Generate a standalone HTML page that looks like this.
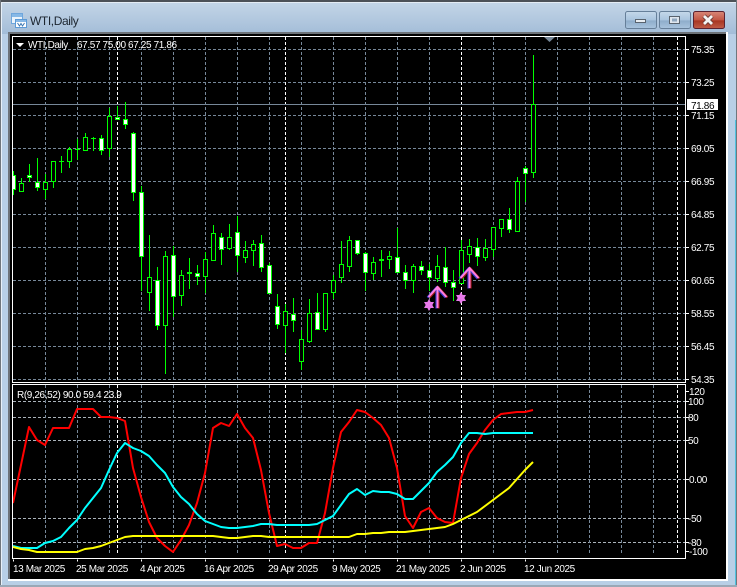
<!DOCTYPE html>
<html><head><meta charset="utf-8"><style>
html,body{margin:0;padding:0;width:737px;height:587px;overflow:hidden;background:#b8cfe6}
svg{display:block;position:absolute;left:0;top:0}
text{font-family:"Liberation Sans",sans-serif;font-size:10px;fill:#fff;letter-spacing:-.38px}
</style></head><body>
<svg width="737" height="587" viewBox="0 0 737 587" xmlns="http://www.w3.org/2000/svg">
<defs>
<linearGradient id="t" x1="0" y1="0" x2="0" y2="1"><stop offset="0" stop-color="#c6d7e8"/><stop offset="1" stop-color="#a3bdd8"/></linearGradient>
<linearGradient id="b" x1="0" y1="0" x2="0" y2="1"><stop offset="0" stop-color="#c5d8ea"/><stop offset=".5" stop-color="#a9c4de"/><stop offset=".55" stop-color="#8fadcb"/><stop offset="1" stop-color="#a9c4de"/></linearGradient>
<linearGradient id="c" x1="0" y1="0" x2="0" y2="1"><stop offset="0" stop-color="#d88878"/><stop offset=".5" stop-color="#c25644"/><stop offset=".55" stop-color="#a83622"/><stop offset="1" stop-color="#c05c48"/></linearGradient>
<clipPath id="cp"><rect x="13" y="37" width="672" height="345"/></clipPath>
<clipPath id="cs"><rect x="13" y="385" width="672" height="173"/></clipPath>
</defs>
<!-- window chrome -->
<rect width="737" height="587" fill="#b8cfe6"/>
<rect width="737" height="34" fill="url(#t)"/>
<rect width="737" height="2" fill="#4c5157"/>
<rect y="2" width="737" height="1" fill="#e4ecf4"/>
<rect x="0" y="0" width="1" height="587" fill="#70767c"/>
<rect x="1" y="3" width="1" height="584" fill="#e8f0f8"/>
<rect x="736" y="0" width="1" height="587" fill="#70767c"/>
<rect x="735" y="120" width="1" height="467" fill="#4fc3e0"/>
<rect y="585" width="737" height="2" fill="#9aa8b6"/>
<rect x="8" y="32" width="720" height="549" fill="#fff"/>
<rect x="8" y="32" width="718" height="2" fill="#6d7379"/>
<rect x="8" y="32" width="2" height="547" fill="#6d7379"/>
<rect x="10" y="34" width="716" height="545" fill="#000"/>
<!-- title -->
<g shape-rendering="crispEdges">
<rect x="11.500" y="13.500" width="11" height="10" fill="#eaf3fb" stroke="#6ea6dc"/>
<rect x="12" y="14" width="10" height="3" fill="#86b8e6"/>
<rect x="15.500" y="19.500" width="11" height="8" fill="#fff" stroke="#5c9ad6"/>
<rect x="16" y="20" width="10" height="2" fill="#86b8e6"/>
</g>
<path d="M17.500 23l2 3 1.500-2.500 1.500 2.500 2-3" fill="none" stroke="#3c78b4" stroke-width="1"/>
<text x="30" y="25" style="font-size:12px;fill:#1d2630;letter-spacing:-.4px">WTI,Daily</text>
<!-- buttons -->
<rect x="625.500" y="11.500" width="31" height="17" rx="2" fill="url(#b)" stroke="#667f99"/>
<rect x="659.500" y="11.500" width="31" height="17" rx="2" fill="url(#b)" stroke="#667f99"/>
<rect x="693.500" y="11.500" width="31" height="17" rx="2" fill="url(#c)" stroke="#5c2230"/>
<rect x="635.500" y="19.500" width="10" height="3" fill="#e8edf2" stroke="#59636e"/>
<rect x="669.500" y="16.500" width="10" height="7" fill="#dfe6ee" stroke="#59636e" stroke-width="1"/>
<rect x="672" y="18.500" width="5" height="3" fill="#8fa7bf"/>
<path d="M704 16l8 8M712 16l-8 8" stroke="#6b3a34" stroke-width="4.500" fill="none"/>
<path d="M704 16l8 8M712 16l-8 8" stroke="#f4f4f4" stroke-width="2.800" fill="none"/>
<!-- frames -->
<g fill="none" stroke="#fff" shape-rendering="crispEdges">
<path d="M12.500 36.500H685.500V382.500H12.500Z"/>
<path d="M12.500 384.500H685.500V558.500H12.500Z"/>
<path d="M13 559.500v2M77 559.500v2M141 559.500v2M205 559.500v2M269 559.500v2M333 559.500v2M397 559.500v2M461 559.500v2M525 559.500v2" transform="translate(.5 0)"/>
<path d="M686 49.500h3M686 82.500h3M686 115.500h3M686 148.500h3M686 181.500h3M686 214.500h3M686 247.500h3M686 280.500h3M686 313.500h3M686 346.500h3M686 379.500h3M686 391.500h3M686 401.500h3M686 417.500h3M686 440.500h3M686 479.500h3M686 518.500h3M686 542.500h3M686 551.500h3"/>
</g>
<!-- grid main -->
<g clip-path="url(#cp)" fill="none" shape-rendering="crispEdges">
<path stroke="#778899" stroke-dasharray="3 2" d="M13 49.500H685M13 82.500H685M13 115.500H685M13 148.500H685M13 181.500H685M13 214.500H685M13 247.500H685M13 280.500H685M13 313.500H685M13 346.500H685M13 379.500H685M45.500 37V382M77.500 37V382M109.500 37V382M141.500 37V382M173.500 37V382M205.500 37V382M237.500 37V382M269.500 37V382M301.500 37V382M333.500 37V382M365.500 37V382M397.500 37V382M429.500 37V382M493.500 37V382M525.500 37V382M557.500 37V382M589.500 37V382M621.500 37V382M653.500 37V382"/>
<path stroke="#fff" stroke-dasharray="3 2" d="M117.500 37V382M285.500 37V382M461.500 37V382M677.500 37V382"/>
<path stroke="#778899" d="M13 104.500H686"/>
<path stroke="#00ff00" d="M13.500 171V195M21.500 178V192M29.500 164V182M37.500 158V191M45.500 174V199M53.500 161V188M61.500 156V173M69.500 147V168M77.500 139V160M85.500 133V151M93.500 137V151M101.500 135V155M109.500 108V157M117.500 106V120M125.500 102V129M133.500 132V201M141.500 186V291M149.500 235V311M157.500 267V330M165.500 251V374M173.500 246V317M181.500 270V306M189.500 258V289M197.500 265V285M205.500 252V293M213.500 225V261M221.500 233V265M229.500 224V250M237.500 216V272M245.500 241V263M253.500 240V266M261.500 235V272M269.500 263V293M277.500 294V329M285.500 304V353M293.500 298V332M301.500 330V370M309.500 299V343M317.500 293V330M325.500 293V332M333.500 275V299M341.500 241V283M349.500 236V272M357.500 240V255M365.500 252V291M373.500 257V280M381.500 250V277M389.500 251V269M397.500 228V273M405.500 265V289M413.500 264V293M421.500 261V275M429.500 264V291M437.500 255V282M445.500 247V287M453.500 270V301M461.500 240V283M469.500 239V263M477.500 238V266M485.500 239V261M493.500 227V257M501.500 219V237M509.500 208V233M517.500 177V232M525.500 166V202M533.500 55V178"/>
<path stroke="#00ff00" d="M59 161.500h5M75 149.500h5M91 138.500h5"/>
<path stroke="#00ff00" fill="#000" d="M19.500 183.500h4v8h-4zM43.500 182.500h4v7h-4zM51.500 161.500h4v20h-4zM67.500 149.500h4v12h-4zM83.500 137.500h4v13h-4zM107.500 116.500h4v32h-4zM147.500 277.500h4v15h-4zM163.500 256.500h4v69h-4zM179.500 275.500h4v20h-4zM203.500 259.500h4v17h-4zM211.500 233.500h4v27h-4zM227.500 237.500h4v11h-4zM243.500 250.500h4v7h-4zM251.500 244.500h4v6h-4zM283.500 311.500h4v14h-4zM299.500 339.500h4v22h-4zM307.500 313.500h4v28h-4zM323.500 293.500h4v36h-4zM331.500 280.500h4v12h-4zM339.500 264.500h4v13h-4zM347.500 240.500h4v26h-4zM371.500 262.500h4v11h-4zM387.500 256.500h4v3h-4zM411.500 266.500h4v14h-4zM435.500 266.500h4v12h-4zM459.500 250.500h4v33h-4zM467.500 246.500h4v8h-4zM483.500 248.500h4v9h-4zM491.500 227.500h4v22h-4zM499.500 219.500h4v9h-4zM515.500 181.500h4v50h-4zM531.500 104.500h4v68h-4z"/>
<path stroke="#00ff00" fill="#fff" d="M11.500 175.500h4v14h-4zM27.500 175.500h4v2h-4zM35.500 182.500h4v5h-4zM99.500 138.500h4v12h-4zM115.500 117.500h4v2h-4zM123.500 119.500h4v5h-4zM131.500 133.500h4v59h-4zM139.500 192.500h4v64h-4zM155.500 280.500h4v45h-4zM171.500 255.500h4v41h-4zM187.500 272.500h4v1h-4zM195.500 273.500h4v3h-4zM219.500 237.500h4v12h-4zM235.500 232.500h4v23h-4zM259.500 243.500h4v24h-4zM267.500 265.500h4v28h-4zM275.500 306.500h4v18h-4zM291.500 314.500h4v6h-4zM315.500 312.500h4v17h-4zM355.500 240.500h4v13h-4zM363.500 253.500h4v19h-4zM379.500 259.500h4v1h-4zM395.500 257.500h4v15h-4zM403.500 272.500h4v8h-4zM419.500 266.500h4v4h-4zM427.500 270.500h4v7h-4zM443.500 267.500h4v15h-4zM451.500 282.500h4v5h-4zM475.500 247.500h4v9h-4zM507.500 219.500h4v10h-4zM523.500 168.500h4v5h-4z"/>
</g>
<!-- arrows -->
<g fill="none" stroke-width="2.200">
<g stroke="#a01818" transform="translate(1 .5)"><path d="M428.500 297l9-10 9 10M437.500 288V308"/><path d="M460.500 278l9-10 9 10M469.500 269V288"/></g>
<g stroke="#3a3ad0" transform="translate(-1 .5)"><path d="M428.500 297l9-10 9 10M437.500 288V308"/><path d="M460.500 278l9-10 9 10M469.500 269V288"/></g>
<g stroke="#ff80e0" stroke-width="2"><path d="M428.500 297l9-10 9 10M437.500 288V308"/><path d="M460.500 278l9-10 9 10M469.500 269V288"/></g>
</g>
<g fill="#e878ea">
<path d="M429 299l5 9h-10z"/><path d="M429 311l-5-9h10z"/>
<path d="M461 292l5 9h-10z"/><path d="M461 304l-5-9h10z"/>
</g>
<!-- indicator -->
<g clip-path="url(#cs)" fill="none" shape-rendering="crispEdges">
<path stroke="#aab2ba" stroke-dasharray="3 2" d="M13 401.500H685M13 417.500H685M13 440.500H685M13 479.500H685M13 518.500H685M13 542.500H685"/>
<path stroke="#778899" stroke-dasharray="3 2" d="M45.500 385V555M77.500 385V555M109.500 385V555M141.500 385V555M173.500 385V555M205.500 385V555M237.500 385V555M269.500 385V555M301.500 385V555M333.500 385V555M365.500 385V555M397.500 385V555M429.500 385V555M493.500 385V555M525.500 385V555M557.500 385V555M589.500 385V555M621.500 385V555M653.500 385V555"/>
<path stroke="#fff" stroke-dasharray="3 2" d="M117.500 385V555M285.500 385V555M461.500 385V555M677.500 385V555"/>
</g>
<g clip-path="url(#cs)" fill="none" stroke-width="2" stroke-linejoin="round">
<polyline stroke="#ff0000" points="13,503 21,465 29,427 37,440 45,445 53,428 61,428 69,428 77,409 85,409 93,409 101,417 109,417 117,418 125,421 133,468 141,497 149,522 157,538 165,546 173,552 181,540 189,525 197,503 205,473 213,428 221,423 229,426 237,414 245,428 253,438 261,470 269,513 277,546 285,544 293,548 301,548 309,543 317,543 325,513 333,468 341,432 349,422 357,410 365,412 373,418 381,425 389,438 397,468 405,516 413,528 421,512 429,508 437,518 445,522 453,523 461,478 469,454 477,443 485,430 493,420 501,414 509,413 517,412 525,412 533,410"/>
<polyline stroke="#00ffff" points="13,546 21,548 29,548 37,548 45,543 53,541 61,537 69,528 77,520 85,508 93,498 101,488 109,470 117,453 125,443 133,448 141,451 149,456 157,465 165,473 173,487 181,497 189,504 197,514 205,521 213,524 221,527 229,528 237,528 245,527 253,526 261,524 269,524 277,525 285,525 293,525 301,525 309,525 317,524 325,520 333,516 341,505 349,494 357,489 365,495 373,491 381,492 389,492 397,494 405,499 413,499 421,491 429,483 437,472 445,465 453,457 461,443 469,433 477,433 485,434 493,433 501,433 509,433 517,433 525,433 533,433"/>
<polyline stroke="#ffff00" points="13,547 21,549 29,550 37,552 45,552 53,552 61,552 69,552 77,552 85,549 93,548 101,546 109,543 117,540 125,537 133,536 141,536 149,536 157,536 165,536 173,536 181,536 189,536 197,536 205,536 213,536 221,537 229,538 237,538 245,537 253,536 261,536 269,537 277,537 285,537 293,537 301,537 309,537 317,537 325,537 333,537 341,537 349,537 357,534 365,534 373,533 381,533 389,532 397,532 405,532 413,531 421,530 429,529 437,528 445,527 453,524 461,520 469,516 477,512 485,506 493,500 501,494 509,488 517,479 525,470 533,462"/>
</g>
<!-- header text -->
<path d="M16 43h8l-4 4z" fill="#fff"/>
<text x="28" y="48">WTI,Daily</text>
<text x="77" y="48">67.57 75.00 67.25 71.86</text>
<text x="17" y="398">R(9,26,52) 90.0 59.4 23.9</text>
<!-- price axis -->
<g>
<text x="691" y="53">75.35</text>
<text x="691" y="86">73.25</text>
<text x="691" y="119">71.15</text>
<text x="691" y="152">69.05</text>
<text x="691" y="185">66.95</text>
<text x="691" y="218">64.85</text>
<text x="691" y="251">62.75</text>
<text x="691" y="284">60.65</text>
<text x="691" y="317">58.55</text>
<text x="691" y="350">56.45</text>
<text x="691" y="383">54.35</text>
<rect x="687" y="99" width="31" height="11" fill="#fff"/>
<text x="691" y="109" style="fill:#000">71.86</text>
<text x="689" y="395">120</text>
<text x="688" y="405">100</text>
<text x="688" y="421">80</text>
<text x="688" y="444">50</text>
<text x="689" y="483">0.00</text>
<text x="688" y="522">-50</text>
<text x="688" y="546">-80</text>
<text x="689" y="555">-100</text>
</g>
<!-- time axis -->
<g>
<text x="13" y="572">13 Mar 2025</text>
<text x="76" y="572">25 Mar 2025</text>
<text x="140" y="572">4 Apr 2025</text>
<text x="204" y="572">16 Apr 2025</text>
<text x="268" y="572">29 Apr 2025</text>
<text x="332" y="572">9 May 2025</text>
<text x="396" y="572">21 May 2025</text>
<text x="460" y="572">2 Jun 2025</text>
<text x="524" y="572">12 Jun 2025</text>
</g>
<path d="M544 37h11l-5.500 5z" fill="#778899"/>
</svg>
</body></html>
